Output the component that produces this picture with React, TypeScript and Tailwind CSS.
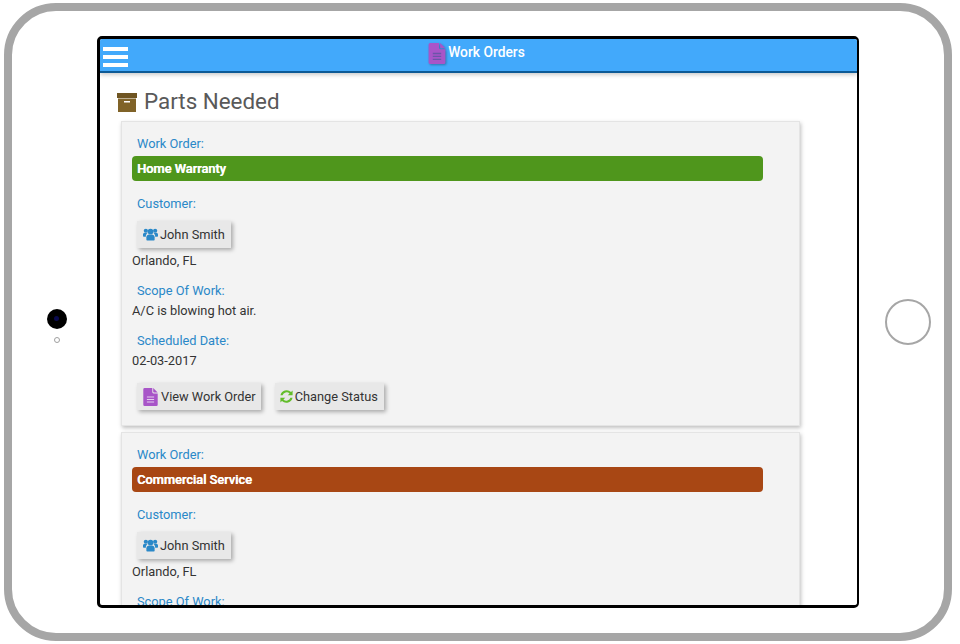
import React from "react";

const DocIcon = ({ className = "", line = "#e3cdee" }: { className?: string; line?: string }) => (
  <svg viewBox="0 0 16 20" className={className}>
    <path d="M1.5 0H10v4.500A1.500 1.500 0 0 0 11.500 6H16v12.500a1.500 1.500 0 0 1-1.500 1.500h-13A1.500 1.500 0 0 1 0 18.500V1.500A1.500 1.500 0 0 1 1.500 0z" fill="#a855c8" />
    <path d="M11 0l5 5h-4a1 1 0 0 1-1-1z" fill="#a855c8" />
    <path d="M4 10h8M4 12.800h8M4 15.600h8" stroke={line} strokeWidth="1.200" />
  </svg>
);

const UsersIcon = () => (
  <svg viewBox="0 0 20 16" className="w-[15px] h-[13px]" fill="#2a88c8">
    <circle cx="10" cy="4" r="3.800" />
    <circle cx="3.800" cy="3" r="2.800" />
    <circle cx="16.200" cy="3" r="2.800" />
    <path d="M4.500 15v-3.500C4.500 9.500 6.500 8 8 8h4c1.500 0 3.500 1.500 3.500 3.500V15a1 1 0 0 1-1 1h-9a1 1 0 0 1-1-1z" />
    <path d="M0 10V8c0-1.300 1-2.500 2-2.500h3.500c.4 0 .7.100 1 .300C4.500 7.300 3.800 8.700 3.800 10.500V11H1a1 1 0 0 1-1-1z" />
    <path d="M20 10V8c0-1.300-1-2.500-2-2.500h-3.500c-.4 0-.7.100-1 .300 2 1.500 2.700 2.900 2.700 4.700V11H19a1 1 0 0 0 1-1z" />
  </svg>
);

const RefreshIcon = () => (
  <svg viewBox="0 0 16 16" className="w-[13px] h-[13px]" fill="#62bd2a">
    <path d="M13.600 2.400 15.500.500V6.500H9.500l2.300-2.300A5.200 5.200 0 0 0 3.200 6.500H.600A7.800 7.800 0 0 1 13.600 2.400z" />
    <path d="M2.400 13.600.500 15.500V9.500h6L4.200 11.800a5.200 5.200 0 0 0 8.600-2.300h2.600A7.800 7.800 0 0 1 2.400 13.600z" />
  </svg>
);

const Btn = ({ children, className = "" }: { children: React.ReactNode; className?: string }) => (
  <div className={`inline-flex items-center h-[27px] bg-[#e8e8e8] text-[#333] text-[12.8px] shadow-[2px_2px_4px_rgba(0,0,0,0.3)] ${className}`}>
    {children}
  </div>
);

const Label = ({ children }: { children: React.ReactNode }) => (
  <div className="pl-[5px] text-[12.8px] leading-[20px] text-[#2a88c8]">{children}</div>
);

const Card = ({ title, color, children }: { title: string; color: string; children?: React.ReactNode }) => (
  <div className="w-[679px] ml-[21px] mb-[6px] border border-[#e4e4e4] bg-[#f3f3f3] shadow-[1px_2px_4px_rgba(0,0,0,0.25)] pl-[10px] pr-[36px] pt-[12px] pb-[15px] text-[#333] text-[12.8px] leading-[20px]">
    <Label>Work Order:</Label>
    <div className={`mt-[2px] h-[25px] rounded-[4px] pl-[5px] flex items-center text-white font-medium [text-shadow:0.4px_0_0_#fff] text-[12.8px] ${color}`}>{title}</div>
    <div className="mt-[13px]"><Label>Customer:</Label></div>
    <div className="mt-[7px] pl-[5px] flex">
      <Btn className="pl-[6px] pr-[6px] gap-[2px]"><UsersIcon />John Smith</Btn>
    </div>
    <div className="mt-[3px]">Orlando, FL</div>
    {children}
  </div>
);

export default function App() {
  return (
    <div className="w-[960px] h-[644px] bg-white pl-[4px] pt-[3px] font-['Roboto',sans-serif]">
      <div className="w-[948px] h-[638px] rounded-[52px] border-[8px] border-[#a6a6a6] flex items-center">
        <div className="w-[85px] flex flex-col items-center pl-[4px] mt-[7px] gap-[8px] shrink-0">
          <div className="w-[20px] h-[20px] rounded-full bg-black flex items-center justify-center">
            <div className="w-[5px] h-[5px] rounded-full bg-[#0a0a50]" />
          </div>
          <div className="w-[6px] h-[6px] rounded-full border border-[#a0a0a0] bg-white" />
        </div>
        <div className="w-[762px] h-[572px] border-[3px] border-r-[2px] border-black rounded-[5px] overflow-hidden bg-white shrink-0 flex flex-col">
          <div className="h-[34px] shrink-0 bg-[#42a9fb] border-b-[2px] border-[#0d5a96] shadow-[0_2px_4px_rgba(0,0,0,0.2)] relative flex items-start justify-center text-white text-[13.8px] font-medium">
            <div className="absolute left-[3px] top-[8px] w-[25px] flex flex-col gap-[4px]">
              <div className="h-[4px] bg-white" /><div className="h-[4px] bg-white" /><div className="h-[4px] bg-white" />
            </div>
            <div className="flex items-start pt-[4px] -ml-[4px]">
              <DocIcon line="#6a55a8" className="w-[18px] h-[21px] drop-shadow-[1px_1px_1px_rgba(0,0,0,0.3)]" />
              <span className="ml-[2px] leading-[18px]">Work Orders</span>
            </div>
          </div>
          <div className="flex-1 overflow-hidden">
            <div className="flex items-center pl-[17px] pt-[10px] h-[48px] text-[#595959] text-[22.4px]">
              <svg viewBox="0 0 20 19" className="w-[20px] h-[19px] mr-[7px]">
                <rect x="0" y="0" width="20" height="5" fill="#6f5522" />
                <rect x="1" y="5.500" width="18" height="13.500" fill="#806328" />
                <rect x="7" y="8" width="6" height="1.500" fill="#fff" />
              </svg>
              Parts Needed
            </div>
            <Card title="Home Warranty" color="bg-[#4f961c]">
              <div className="mt-[10px]"><Label>Scope Of Work:</Label></div>
              <div>A/C is blowing hot air.</div>
              <div className="mt-[10px]"><Label>Scheduled Date:</Label></div>
              <div>02-03-2017</div>
              <div className="mt-[12px] pl-[5px] flex gap-[14px]">
                <Btn className="pl-[6px] pr-[5px] gap-[3px]"><DocIcon className="w-[15px] h-[18px]" />View Work Order</Btn>
                <Btn className="pl-[5px] pr-[6px] gap-[2px]"><RefreshIcon />Change Status</Btn>
              </div>
            </Card>
            <Card title="Commercial Service" color="bg-[#a84714]">
              <div className="mt-[10px]"><Label>Scope Of Work:</Label></div>
            </Card>
          </div>
        </div>
        <div className="flex-1 flex justify-center pl-[13px] -mt-[1px]">
          <div className="w-[46px] h-[46px] rounded-full border-[2px] border-[#a6a6a6] bg-white" />
        </div>
      </div>
    </div>
  );
}
